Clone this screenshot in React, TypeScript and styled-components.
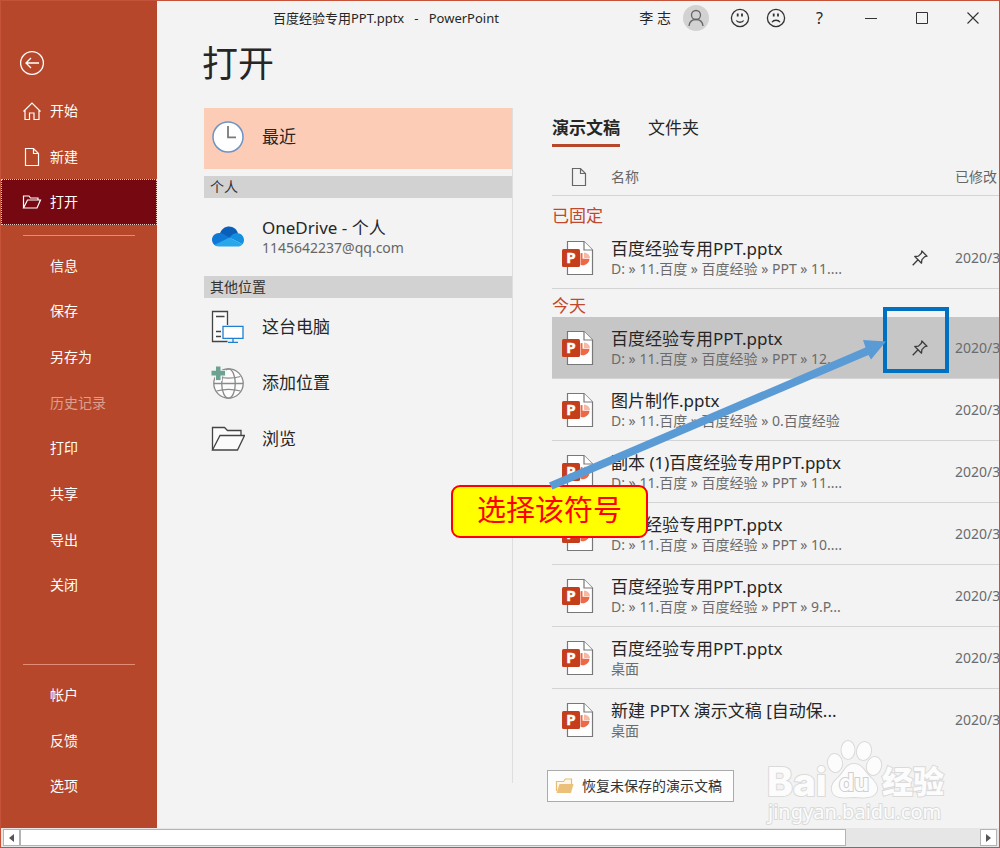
import React from "react";
import styled, { createGlobalStyle } from "styled-components";

const GlobalStyle = createGlobalStyle`
  *, *::before, *::after { box-sizing: border-box; }
  body {
    margin: 0;
    background: #f3f3f3;
    color: #262626;
    font-family: "Noto Sans", "Noto Sans CJK SC", sans-serif;
    font-size: 14px;
    line-height: 20px;
  }
  button {
    margin: 0;
    padding: 0;
    border: 0;
    background: none;
    color: inherit;
    font: inherit;
    text-align: left;
    cursor: pointer;
  }
  svg { display: block; flex: none; }
`;

const Window = styled.div`
  position: relative;
  display: flex;
  flex-direction: column;
  min-height: 100vh;
  border: 1px solid #c4533a;
  overflow: hidden;
`;

const Body = styled.div`
  display: flex;
  flex: 1;
`;

/* ---------- Sidebar ---------- */

const Sidebar = styled.nav`
  display: flex;
  flex-direction: column;
  flex: none;
  width: 156px;
  padding-bottom: 19px;
  background: #b7472a;
  color: #fff;
`;

const BackButton = styled.button`
  width: 26px;
  height: 26px;
  margin: 49px 0 12px 18px;
`;

const NavGroup = styled.div<{ $height: number }>`
  display: flex;
  flex-direction: column;
  min-height: ${(p) => p.$height}px;
`;

const NavItem = styled.button<{ $active?: boolean; $muted?: boolean }>`
  display: flex;
  flex: 1;
  align-items: center;
  gap: 8px;
  padding-left: 21px;
  background: ${(p) => (p.$active ? "#750811" : "transparent")};
  outline: ${(p) => (p.$active ? "1px dotted #e8c8c0" : "none")};
  outline-offset: -1px;
  color: ${(p) => (p.$muted ? "#d9a08f" : "#fff")};
`;

const NavIcon = styled.span`
  display: flex;
  width: 20px;
  justify-content: center;
`;

const NavDivider = styled.hr<{ $bottom?: boolean }>`
  width: 112px;
  height: 1px;
  margin: ${(p) => (p.$bottom ? "auto 0 7px 22px" : "10px 0 7px 22px")};
  border: 0;
  background: #e08e77;
`;

/* ---------- Title bar ---------- */

const Main = styled.main`
  display: flex;
  flex: 1;
  flex-direction: column;
  min-width: 0;
`;

const TitleBar = styled.header`
  display: flex;
  align-items: center;
  height: 33px;
  padding-right: 1px;
`;

const DocumentTitle = styled.div`
  flex: 1;
  padding-left: 116px;
  font-size: 13px;
  white-space: pre;
`;

const UserName = styled.span`
  margin-right: 12px;
  white-space: pre;
`;

const Avatar = styled.button`
  width: 26px;
  height: 26px;
  margin-right: 13px;
  border-radius: 50%;
  background: #d2d2d2;
`;

const BarButton = styled.button<{ $width: number }>`
  display: flex;
  align-items: center;
  justify-content: center;
  width: ${(p) => p.$width}px;
  height: 32px;
  font-size: 16px;
`;

const PageTitle = styled.h1`
  margin: 6px 0 20px 45px;
  font-size: 36px;
  font-weight: 400;
  line-height: 48px;
`;

const Columns = styled.div`
  display: flex;
  flex: 1;
`;

/* ---------- Places ---------- */

const Places = styled.section`
  flex: none;
  width: 309px;
  margin: 0 0 45px 47px;
  border-right: 1px solid #dedede;
`;

const Place = styled.button<{ $height: number; $selected?: boolean }>`
  display: flex;
  align-items: center;
  gap: 17px;
  width: 100%;
  height: ${(p) => p.$height}px;
  padding: ${(p) => (p.$selected ? "0 0 3px 7px" : "0 0 0 7px")};
  background: ${(p) => (p.$selected ? "#fcccb6" : "transparent")};
`;

const PlaceText = styled.span`
  display: flex;
  flex-direction: column;
`;

const PlaceName = styled.span`
  font-size: 17px;
  line-height: 22px;
`;

const PlaceDetail = styled.span`
  color: #666;
  font-size: 14px;
  line-height: 18px;
`;

const PlaceHeading = styled.h2<{ $spaced?: boolean }>`
  margin: ${(p) => (p.$spaced ? "7px 0 0" : "0 0 1px")};
  padding-left: 6px;
  background: #d2d2d2;
  color: #333;
  font-size: 14px;
  font-weight: 400;
  line-height: 22px;
`;

/* ---------- Files ---------- */

const Files = styled.section`
  flex: 1;
  min-width: 0;
  padding: 6px 0 26px 39px;
  overflow: hidden;
`;

const Tabs = styled.div`
  display: flex;
  gap: 28px;
`;

const Tab = styled.button<{ $active?: boolean }>`
  height: 33px;
  padding-bottom: 2px;
  border-bottom: 3px solid ${(p) => (p.$active ? "#b7472a" : "transparent")};
  font-size: 17px;
  font-weight: ${(p) => (p.$active ? 700 : 400)};
`;

const FileTable = styled.table`
  width: 100%;
  margin-top: 11px;
  border-spacing: 0;
  table-layout: fixed;
`;

const IconCol = styled.col`
  width: 59px;
`;

const PinCol = styled.col`
  width: 70px;
`;

const DateCol = styled.col`
  width: 44px;
`;

const HeadCell = styled.th`
  height: 38px;
  padding: 0;
  border-bottom: 1px solid #d4d4d4;
  overflow: hidden;
  color: #666;
  font-weight: 400;
  text-align: left;
  white-space: nowrap;
`;

const GroupCell = styled.th<{ $height: number }>`
  height: ${(p) => p.$height}px;
  padding: 0;
  color: #c0482c;
  font-size: 17px;
  font-weight: 400;
  line-height: 22px;
  text-align: left;
  vertical-align: bottom;
`;

const FileRow = styled.tr<{ $selected?: boolean }>`
  background: ${(p) => (p.$selected ? "#c6c6c6" : "transparent")};
`;

const Cell = styled.td<{ $last?: boolean }>`
  height: 62px;
  padding: 0;
  border-bottom: 1px solid ${(p) => (p.$last ? "transparent" : "#d4d4d4")};
  overflow: hidden;
  color: #6b6b6b;
  white-space: nowrap;
`;

const IconBox = styled.span<{ $left: number }>`
  display: block;
  padding-left: ${(p) => p.$left}px;
`;

const FileName = styled.div`
  color: #262626;
  font-size: 17px;
  line-height: 22px;
`;

const FilePath = styled.div`
  font-size: 14px;
  line-height: 18px;
`;

const PinButton = styled.button`
  display: block;
  margin: 0 auto;
`;

const RecoverButton = styled.button`
  display: flex;
  align-items: center;
  gap: 7px;
  height: 32px;
  margin: 19px 0 0 -5px;
  padding: 0 11px 0 7px;
  border: 1px solid #ababab;
  background: #fdfdfd;
  color: #333;
  white-space: nowrap;
`;

/* ---------- Horizontal scroll bar ---------- */

const ScrollBar = styled.div`
  display: flex;
  height: 19px;
  padding: 1px 2px 1px 2px;
  background: #e6e6e6;
`;

const ScrollButton = styled.button`
  display: flex;
  align-items: center;
  justify-content: center;
  width: 17px;
  border: 1px solid #b4b4b4;
  background: #fff;
`;

const ScrollTrack = styled.div`
  flex: 1;
`;

const ScrollThumb = styled.div`
  width: 86%;
  height: 100%;
  border: 1px solid #b4b4b4;
  background: #fff;
`;

/* ---------- Annotations lying over the window ---------- */

const HighlightBox = styled.div`
  position: absolute;
  top: 306px;
  left: 882px;
  width: 66px;
  height: 66px;
  border: 4px solid #0070c0;
`;

const Arrow = styled.svg`
  position: absolute;
  top: 329px;
  left: 539px;
  pointer-events: none;
`;

const Callout = styled.div`
  position: absolute;
  top: 484px;
  left: 450px;
  width: 197px;
  height: 53px;
  border: 2px solid #f00;
  border-radius: 9px;
  background: #ff0;
  color: #f00;
  font-size: 29px;
  line-height: 46px;
  text-align: center;
`;

const Watermark = styled.svg`
  position: absolute;
  top: 734px;
  left: 759px;
  pointer-events: none;
`;

/* ---------- Icons ---------- */

const BackIcon = () => (
  <svg width="26" height="26" viewBox="0 0 26 26" fill="none" stroke="#fff" strokeWidth="1.3">
    <circle cx="13" cy="13" r="11.4" />
    <path d="M20 13H7M12 8l-5 5 5 5" />
  </svg>
);

const HomeIcon = () => (
  <svg width="20" height="20" viewBox="0 0 20 20" fill="none" stroke="#fff" strokeWidth="1.2">
    <path d="M1.5 10.5 10 2l8.500 8.500M3 9.200V18.500h4.500V12h4.500v6.500H17V9.200" />
  </svg>
);

const PageIcon = ({ color = "#fff" }: { color?: string }) => (
  <svg width="16" height="20" viewBox="0 0 16 20" fill="none" stroke={color} strokeWidth="1.2">
    <path d="M1.500 1.500h8l5 5v12h-13zM9.500 1.500v5h5" />
  </svg>
);

const OpenIcon = () => (
  <svg width="20" height="16" viewBox="0 0 20 16" fill="none" stroke="#fff" strokeWidth="1.2">
    <path d="M1.500 14V2h5.500l1.500 2h7.500v2M1.500 14 5.500 6H18.500l-3.500 8z" />
  </svg>
);

const PersonIcon = () => (
  <svg width="26" height="26" viewBox="0 0 26 26" fill="none" stroke="#666" strokeWidth="1.3">
    <circle cx="13" cy="10" r="4.500" />
    <path d="M6 21c.5-4 3.200-6.500 7-6.500s6.500 2.500 7 6.500" />
  </svg>
);

const FaceIcon = ({ sad }: { sad?: boolean }) => (
  <svg width="20" height="20" viewBox="0 0 20 20" fill="none" stroke="#333" strokeWidth="1.300">
    <circle cx="10" cy="10" r="8.600" />
    <path d={sad ? "M6 14.200c1.500-2.600 6.500-2.600 8 0" : "M6.300 12.500c1.500 2.300 5.900 2.300 7.400 0"} />
    <path d="M7.700 5.500v3M12 5.500v3" strokeWidth="1.800" />
  </svg>
);

const MinimizeIcon = () => (
  <svg width="12" height="12" viewBox="0 0 12 12" stroke="#333">
    <path d="M0 6.500h12" />
  </svg>
);

const MaximizeIcon = () => (
  <svg width="12" height="12" viewBox="0 0 12 12" fill="none" stroke="#333">
    <path d="M.5.5h11v11H.5z" />
  </svg>
);

const CloseIcon = () => (
  <svg width="12" height="12" viewBox="0 0 12 12" stroke="#333" strokeWidth="1.100">
    <path d="M.5.5l11 11M11.500.5l-11 11" />
  </svg>
);

const ClockIcon = () => (
  <svg width="34" height="34" viewBox="0 0 34 34" fill="none">
    <circle cx="17" cy="17" r="15" fill="#fff" stroke="#6e94c4" strokeWidth="1.500" />
    <path d="M17 6v11.300h8" stroke="#7a7a7a" strokeWidth="1.800" />
  </svg>
);

const CloudIcon = () => (
  <svg width="34" height="24" viewBox="0 0 34 24">
    <path d="M9 8C11 3.500 14.500 1.500 18 1.500c4.500 0 8 3 9 7L18 14z" fill="#0a5fb8" />
    <path d="M8 21.500c-4 0-7-3-7-6.700C1 11 4 8 8 8c2 0 4 .6 5.500 1.800L21 14 6 21.300z" fill="#0f78d4" />
    <path d="M18.500 12.500 21.500 9.500C23 8.400 25 8 27 8.300c3.500.4 6 3.200 6 6.700 0 1.800-.6 3.200-1.600 4.300z" fill="#1490df" />
    <path d="M3.700 19.800 18.500 12.400 31.500 19.200c-1.200 1.500-2.900 2.300-5 2.300H8c-1.600 0-3.200-.7-4.300-1.700z" fill="#28a8ea" />
  </svg>
);

const ComputerIcon = () => (
  <svg width="34" height="34" viewBox="0 0 34 34" fill="none" strokeWidth="1.300">
    <path d="M16.500 31.500h-15v-30h15V15" fill="#fbfbfb" stroke="#444" />
    <path d="M5 6.500h8.500M5 21.500h5M5 26.500h5" stroke="#444" />
    <path d="M12 16.300h20v12H12z" fill="#fff" stroke="#1f7fd0" />
    <path d="M22 28.300v4M17 32.400h10" stroke="#1f7fd0" />
  </svg>
);

const AddPlaceIcon = () => (
  <svg width="34" height="36" viewBox="0 0 34 36" fill="none">
    <g stroke="#8a8a8a" strokeWidth="1.300">
      <circle cx="17.500" cy="18.500" r="14.700" fill="#fcfcfc" />
      <ellipse cx="17.500" cy="18.500" rx="6.800" ry="14.700" />
      <path d="M2.800 18.500h29.400M5.500 11.500c7 2 17 2 24 0M5.500 26c7-2 17-2 24 0" />
    </g>
    <path d="M4 .500h7V5h4v6.500h-4V16H4v-4.500H0V5h4z" fill="#f3f3f3" />
    <path d="M5 1.500h4.500v4.300H14v4.600H9.500V15H5v-4.600H.5V5.800H5z" fill="#6ba292" />
  </svg>
);

const FolderIcon = () => (
  <svg width="34" height="26" viewBox="0 0 34 26" fill="#fbfbfb" stroke="#444" strokeWidth="1.300">
    <path d="M1.500 24V1.500h12l3 3H30V10" />
    <path d="M1.500 24 9 9.500h24.500L26.500 24z" />
  </svg>
);

const PresentationIcon = () => (
  <svg width="32" height="36" viewBox="0 0 32 36">
    <path d="M5.500 1.500h16.500l8.500 8.500v24.500H5.500z" fill="#fff" stroke="#787878" strokeWidth="1.200" />
    <path d="M22 1.500V10h8.500" fill="#fff" stroke="#787878" strokeWidth="1.200" />
    <path d="M20.500 13a7 7 0 0 0-2 .3v11.400a6.500 6.500 0 0 0 9-6H20.500z" fill="#ee6a47" />
    <path d="M22 12.500a6 6 0 0 1 6 5.500h-6z" fill="#f7b9a4" />
    <rect x="0" y="9" width="18" height="18" rx="1.500" fill="#c43e1c" />
    <text x="9" y="23" fill="#fff" stroke="#fff" strokeWidth=".5" fontFamily="Noto Sans, sans-serif" fontSize="15" fontWeight="700" textAnchor="middle">P</text>
  </svg>
);

const PinIcon = () => (
  <svg width="16" height="16" viewBox="0 0 16 16" fill="none" stroke="#3c3c3c" strokeWidth="1.300" strokeLinejoin="round">
    <path d="M9.800 1 15 6.200l-2.200.4-2.900 3-.4 3.600L2.800 6.500l3.600-.4 3-2.900zM6 9.800.7 15.300" />
  </svg>
);

const RecoverIcon = () => (
  <svg width="20" height="16" viewBox="0 0 20 16">
    <path d="M1.500 13V3.500h7l2-2.500H16.500V6" fill="#fff8ea" stroke="#e8bd72" strokeWidth="1.200" />
    <path d="M1.500 15 4.500 6H18.500L16 15z" fill="#ebc07a" />
  </svg>
);

const ScrollArrow = ({ right }: { right?: boolean }) => (
  <svg width="5" height="8" viewBox="0 0 5 8" fill="#555">
    <path d={right ? "M0 0l5 4-5 4z" : "M5 0 0 4l5 4z"} />
  </svg>
);

/* ---------- Data ---------- */

type FileEntry = { name: string; path: string; selected?: boolean };

const groups: { title: string; height: number; files: FileEntry[] }[] = [
  {
    title: "已固定",
    height: 31,
    files: [{ name: "百度经验专用PPT.pptx", path: "D: » 11.百度 » 百度经验 » PPT » 11...." }],
  },
  {
    title: "今天",
    height: 28,
    files: [
      { name: "百度经验专用PPT.pptx", path: "D: » 11.百度 » 百度经验 » PPT » 12....", selected: true },
      { name: "图片制作.pptx", path: "D: » 11.百度 » 百度经验 » 0.百度经验" },
      { name: "副本 (1)百度经验专用PPT.pptx", path: "D: » 11.百度 » 百度经验 » PPT » 11...." },
      { name: "百度经验专用PPT.pptx", path: "D: » 11.百度 » 百度经验 » PPT » 10...." },
      { name: "百度经验专用PPT.pptx", path: "D: » 11.百度 » 百度经验 » PPT » 9.P..." },
      { name: "百度经验专用PPT.pptx", path: "桌面" },
      { name: "新建 PPTX 演示文稿 [自动保...", path: "桌面" },
    ],
  },
];

const fileActions = ["信息", "保存", "另存为", "历史记录", "打印", "共享", "导出", "关闭"];
const accountActions = ["帐户", "反馈", "选项"];

const TextNavItem = ({ label }: { label: string }) => (
  <NavItem $muted={label === "历史记录"}>
    <NavIcon />
    {label}
  </NavItem>
);

export default function App() {
  return (
    <Window>
      <GlobalStyle />
      <Body>
        <Sidebar>
          <BackButton aria-label="返回">
            <BackIcon />
          </BackButton>
          <NavGroup $height={137}>
            <NavItem>
              <NavIcon><HomeIcon /></NavIcon>
              开始
            </NavItem>
            <NavItem>
              <NavIcon><PageIcon /></NavIcon>
              新建
            </NavItem>
            <NavItem $active>
              <NavIcon><OpenIcon /></NavIcon>
              打开
            </NavItem>
          </NavGroup>
          <NavDivider />
          <NavGroup $height={365}>
            {fileActions.map((label) => <TextNavItem key={label} label={label} />)}
          </NavGroup>
          <NavDivider $bottom />
          <NavGroup $height={137}>
            {accountActions.map((label) => <TextNavItem key={label} label={label} />)}
          </NavGroup>
        </Sidebar>

        <Main>
          <TitleBar>
            <DocumentTitle>百度经验专用PPT.pptx   -   PowerPoint</DocumentTitle>
            <UserName>李 志</UserName>
            <Avatar aria-label="帐户"><PersonIcon /></Avatar>
            <BarButton $width={36} aria-label="笑脸"><FaceIcon /></BarButton>
            <BarButton $width={36} aria-label="哭脸"><FaceIcon sad /></BarButton>
            <BarButton $width={51}>?</BarButton>
            <BarButton $width={51} aria-label="最小化"><MinimizeIcon /></BarButton>
            <BarButton $width={51} aria-label="最大化"><MaximizeIcon /></BarButton>
            <BarButton $width={51} aria-label="关闭窗口"><CloseIcon /></BarButton>
          </TitleBar>
          <PageTitle>打开</PageTitle>

          <Columns>
            <Places>
              <Place $height={61} $selected>
                <ClockIcon />
                <PlaceName>最近</PlaceName>
              </Place>
              <PlaceHeading $spaced>个人</PlaceHeading>
              <Place $height={78}>
                <CloudIcon />
                <PlaceText>
                  <PlaceName>OneDrive - 个人</PlaceName>
                  <PlaceDetail>1145642237@qq.com</PlaceDetail>
                </PlaceText>
              </Place>
              <PlaceHeading>其他位置</PlaceHeading>
              <Place $height={56}>
                <ComputerIcon />
                <PlaceName>这台电脑</PlaceName>
              </Place>
              <Place $height={56}>
                <AddPlaceIcon />
                <PlaceName>添加位置</PlaceName>
              </Place>
              <Place $height={56}>
                <FolderIcon />
                <PlaceName>浏览</PlaceName>
              </Place>
            </Places>

            <Files>
              <Tabs>
                <Tab $active>演示文稿</Tab>
                <Tab>文件夹</Tab>
              </Tabs>
              <FileTable>
                <colgroup>
                  <IconCol />
                  <col />
                  <PinCol />
                  <DateCol />
                </colgroup>
                <thead>
                  <tr>
                    <HeadCell><IconBox $left={19}><PageIcon color="#666" /></IconBox></HeadCell>
                    <HeadCell>名称</HeadCell>
                    <HeadCell />
                    <HeadCell>已修改日</HeadCell>
                  </tr>
                </thead>
                {groups.map((group, g) => (
                  <tbody key={group.title}>
                    <tr>
                      <GroupCell colSpan={4} $height={group.height}>{group.title}</GroupCell>
                    </tr>
                    {group.files.map((file, i) => {
                      const last = g === groups.length - 1 && i === group.files.length - 1;
                      return (
                        <FileRow key={i} $selected={file.selected}>
                          <Cell $last={last}><IconBox $left={10}><PresentationIcon /></IconBox></Cell>
                          <Cell $last={last}>
                            <FileName>{file.name}</FileName>
                            <FilePath>{file.path}</FilePath>
                          </Cell>
                          <Cell $last={last}>
                            {(g === 0 || file.selected) && (
                              <PinButton aria-label="固定"><PinIcon /></PinButton>
                            )}
                          </Cell>
                          <Cell $last={last}>2020/3</Cell>
                        </FileRow>
                      );
                    })}
                  </tbody>
                ))}
              </FileTable>
              <RecoverButton>
                <RecoverIcon />
                恢复未保存的演示文稿
              </RecoverButton>
            </Files>
          </Columns>
        </Main>
      </Body>

      <ScrollBar>
        <ScrollButton aria-label="向左滚动"><ScrollArrow /></ScrollButton>
        <ScrollTrack><ScrollThumb /></ScrollTrack>
        <ScrollButton aria-label="向右滚动"><ScrollArrow right /></ScrollButton>
      </ScrollBar>

      <Watermark width="200" height="96" viewBox="0 0 200 96" fill="#fcfcfc" stroke="#dadada" strokeWidth="2" paintOrder="stroke" fontFamily="Inter, Noto Sans CJK SC, sans-serif">
        <text x="7" y="61" fontSize="39" fontWeight="800">Bai</text>
        <ellipse cx="75" cy="28" rx="7" ry="9" transform="rotate(-8 75 28)" />
        <ellipse cx="88" cy="15" rx="6.500" ry="9" />
        <ellipse cx="104" cy="16" rx="7" ry="9" transform="rotate(12 104 16)" />
        <ellipse cx="114" cy="31" rx="7" ry="9" transform="rotate(15 114 31)" />
        <path d="M94 29c8 0 10 7 16 13 5 5 8 9 7 13-2 8-11 8-23 7-12 1-21 1-22-7-1-4 2-9 7-13 6-6 7-13 15-13z" />
        <text x="94" y="56" fontSize="24" fontWeight="700" textAnchor="middle" stroke="#cfcfcf">du</text>
        <text x="122" y="58" fontSize="31" fontWeight="900">经验</text>
        <text x="8" y="84" fontSize="20" fontFamily="Noto Sans, sans-serif">jingyan.baidu.com</text>
      </Watermark>

      <HighlightBox />
      <Callout>选择该符号</Callout>
      <Arrow width="350" height="160" viewBox="0 0 350 160" fill="#5b9bd5">
        <path d="M9 152.500 325.500 17.500 323 10 346 11.500 331 29.500 328.500 25 12.500 159.500z" />
      </Arrow>
    </Window>
  );
}
